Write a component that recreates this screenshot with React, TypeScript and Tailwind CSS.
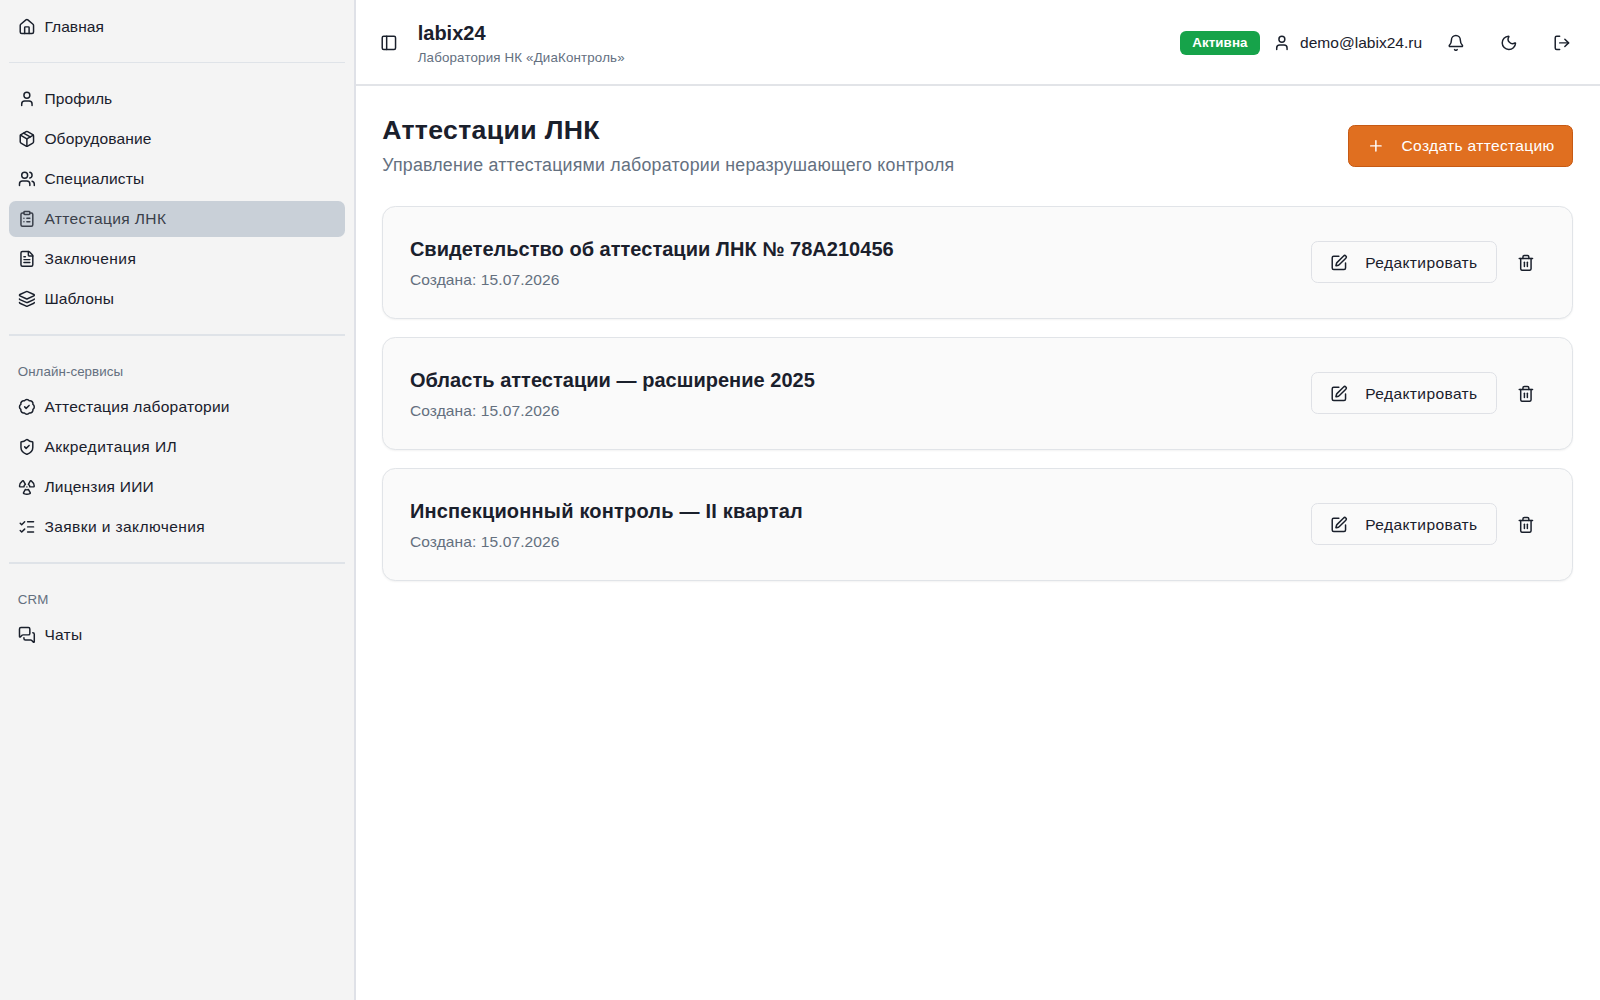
import {
  House, User, Package, Users, ClipboardList, FileText, Layers, BadgeCheck, ShieldCheck,
  Radiation, ListChecks, MessagesSquare, PanelLeft, Bell, Moon, LogOut, Plus, SquarePen, Trash2,
  type LucideIcon,
} from "lucide-react";

const ICON = "size-[17.78px] shrink-0";

type NavItemProps = { icon: LucideIcon; label: string; tracking: string; active?: boolean };

function NavItem({ icon: Icon, label, tracking, active }: NavItemProps) {
  return (
    <a
      className={
        "flex h-[35.56px] items-center gap-[8.89px] rounded-[6.67px] px-[8.89px] " +
        (active ? "bg-[#c9d0d8] text-[#3a3f4a]" : "text-[#1a202c]")
      }
    >
      <Icon className={ICON} />
      <span className={"whitespace-nowrap text-[15.56px] leading-[22.22px] " + tracking}>{label}</span>
    </a>
  );
}

function Separator() {
  return <div className="my-[17.78px] h-[1.3px] bg-[#dfe3e8]" />;
}

function GroupLabel({ children }: { children: string }) {
  return (
    <div className="flex h-[35.56px] items-center px-[8.89px] pt-px text-[13.33px] tracking-[0.07px] text-[#64707f]">
      {children}
    </div>
  );
}

function Sidebar() {
  return (
    <aside className="flex w-[355.56px] shrink-0 flex-col border-r-2 border-[#dfe1e7] bg-[#f4f4f4] pl-[8.89px] pr-[8.3px] pt-[8.89px]">
      <NavItem icon={House} label="Главная" tracking="tracking-[0.07px]" />
      <Separator />
      <nav className="flex flex-col gap-[4.44px]">
        <NavItem icon={User} label="Профиль" tracking="tracking-[0.12px]" />
        <NavItem icon={Package} label="Оборудование" tracking="tracking-[0.12px]" />
        <NavItem icon={Users} label="Специалисты" tracking="tracking-[0.15px]" />
        <NavItem icon={ClipboardList} label="Аттестация ЛНК" tracking="tracking-[0.36px]" active />
        <NavItem icon={FileText} label="Заключения" tracking="tracking-[0.4px]" />
        <NavItem icon={Layers} label="Шаблоны" tracking="tracking-[0.12px]" />
      </nav>
      <Separator />
      <GroupLabel>Онлайн-сервисы</GroupLabel>
      <nav className="flex flex-col gap-[4.44px]">
        <NavItem icon={BadgeCheck} label="Аттестация лаборатории" tracking="tracking-[0.23px]" />
        <NavItem icon={ShieldCheck} label="Аккредитация ИЛ" tracking="tracking-[0.46px]" />
        <NavItem icon={Radiation} label="Лицензия ИИИ" tracking="tracking-[0.22px]" />
        <NavItem icon={ListChecks} label="Заявки и заключения" tracking="tracking-[0.4px]" />
      </nav>
      <Separator />
      <GroupLabel>CRM</GroupLabel>
      <NavItem icon={MessagesSquare} label="Чаты" tracking="tracking-[0.25px]" />
    </aside>
  );
}

function Header() {
  return (
    <header className="flex h-[86px] shrink-0 items-center border-b-2 border-[#e2e4e8] pl-[24.4px] pr-[29px]">
      <PanelLeft className="mt-px size-[17.78px] shrink-0" />
      <div className="ml-[20px] pt-[4px]">
        <div className="text-[20px] font-bold leading-[27px]">labix24</div>
        <div className="text-[13.33px] leading-[22px] tracking-[0.16px] text-[#64707f]">
          Лаборатория НК «ДиаКонтроль»
        </div>
      </div>
      <div className="ml-auto flex items-center pt-px">
        <span className="mt-px flex h-[24.5px] w-[80px] items-center justify-center rounded-[6px] bg-[#16a34a] text-[13.33px] font-bold tracking-[0.1px] text-white">
          Активна
        </span>
        <User className="ml-[13.5px] size-[17.78px] shrink-0" />
        <span className="ml-[8.89px] text-[15.56px]">demo@labix24.ru</span>
        <Bell className="ml-[24.5px] size-[17.78px] shrink-0" />
        <Moon className="ml-[35.56px] size-[17.78px] shrink-0" />
        <LogOut className="ml-[35.56px] size-[17.78px] shrink-0" />
      </div>
    </header>
  );
}

const records = [
  { title: "Свидетельство об аттестации ЛНК № 78А210456", tracking: "tracking-[0.02px]" },
  { title: "Область аттестации — расширение 2025", tracking: "tracking-[0.03px]" },
  { title: "Инспекционный контроль — II квартал", tracking: "tracking-[0.2px]" },
];

function RecordCard({ title, tracking }: { title: string; tracking: string }) {
  return (
    <article className="flex h-[113px] items-center rounded-[13.3px] border border-[#e1e4e8] bg-[#fafafa] pl-[26.7px] pr-[38px] shadow-[0_1px_2px_rgba(0,0,0,0.05)]">
      <div className="pt-[2px]">
        <h2 className={"text-[20px] font-bold leading-[28px] " + tracking}>{title}</h2>
        <p className="mt-[6px] text-[15.56px] leading-[22px] tracking-[0.09px] text-[#64707f]">
          Создана: 15.07.2026
        </p>
      </div>
      <button className="ml-auto flex h-[42px] w-[186px] items-center rounded-[6.67px] border border-[#dfe1e6] pl-[18px]">
        <SquarePen className={ICON} />
        <span className="ml-[17.4px] text-[15.56px] tracking-[0.38px]">Редактировать</span>
      </button>
      <Trash2 className="ml-[19.5px] size-[17.78px] shrink-0" />
    </article>
  );
}

export default function App() {
  return (
    <div className="flex h-[1000px] w-[1600px] overflow-hidden bg-white font-['Liberation_Sans',Arial,sans-serif] text-[#1a202c]">
      <Sidebar />
      <div className="flex min-w-0 flex-1 flex-col">
        <Header />
        <main className="px-[26.67px] pt-[26.67px]">
          <div className="flex h-[66.6px] items-center justify-between">
            <div>
              <h1 className="pt-[3px] text-[26.67px] font-bold leading-[35.56px] tracking-[0.34px]">Аттестации ЛНК</h1>
              <p className="text-[17.78px] leading-[33px] tracking-[0.23px] text-[#64707f]">
                Управление аттестациями лаборатории неразрушающего контроля
              </p>
            </div>
            <button className="flex h-[42.2px] w-[225.5px] items-center rounded-[6.67px] border border-[#c65a14] bg-[#e06f20] pl-[17.78px] text-white">
              <Plus className={ICON} />
              <span className="ml-[17.2px] whitespace-nowrap text-[15.56px] tracking-[0.33px]">Создать аттестацию</span>
            </button>
          </div>
          <div className="mt-[26.67px] flex flex-col gap-[18px]">
            {records.map((record) => (
              <RecordCard key={record.title} title={record.title} tracking={record.tracking} />
            ))}
          </div>
        </main>
      </div>
    </div>
  );
}
